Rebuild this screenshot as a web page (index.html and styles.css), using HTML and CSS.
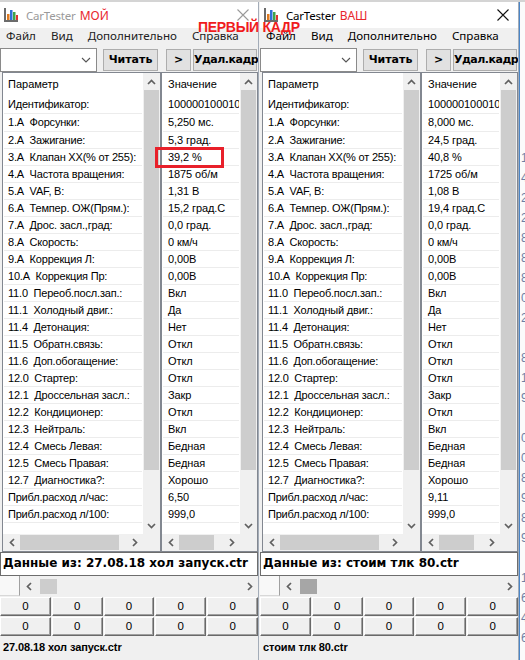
FILE: index.html
```html
<!DOCTYPE html>
<html>
<head>
<meta charset="utf-8">
<link rel="stylesheet" href="styles.css">
</head>
<body>
<div class="desk">
  <div class="win win-left">
    <div class="titlebar">
      <svg class="appicon" width="16" height="16" viewBox="0 0 16 16"><rect x="1" y="1" width="2" height="14" fill="#6b6b6b"/><rect x="1" y="13" width="14" height="2" fill="#6b6b6b"/><rect x="4" y="7" width="2.5" height="6" fill="#e07b20"/><rect x="7" y="3" width="2.5" height="10" fill="#2f6fd6"/><rect x="10" y="5" width="2.5" height="8" fill="#3fa34a"/><rect x="13" y="8" width="2" height="5" fill="#d33"/></svg>
      <span class="ttl">CarTester</span><span class="tag">МОЙ</span>
      <svg class="close" width="12" height="12" viewBox="0 0 12 12"><path d="M0.5 0.5L11.5 11.5M11.5 0.5L0.5 11.5" stroke="currentColor" stroke-width="1.1" fill="none"/></svg>
    </div>
    <div class="menubar"><span>Файл</span><span>Вид</span><span>Дополнительно</span><span>Справка</span></div>
    <div class="toolbar">
      <div class="combo"><svg width="10" height="6" viewBox="0 0 10 6"><path d="M1 1L5 5L9 1" stroke="#555" stroke-width="1.1" fill="none"/></svg></div>
      <div class="btn btn-read">Читать</div>
      <div class="btn btn-next">&gt;</div>
      <div class="btn btn-del">Удал.кадр</div>
    </div>
    <div class="lists">
      <div class="panel panel-param">
        <div class="pbody">
          <div class="rows">
            <div class="hdr">Параметр</div>
            <div class="row tall">Идентификатор:</div>
            <div class="row tall">1.А  Форсунки:</div>
            <div class="row">2.А  Зажигание:</div>
            <div class="row">3.А  Клапан ХХ(% от 255):</div>
            <div class="row">4.А  Частота вращения:</div>
            <div class="row">5.А  VAF, В:</div>
            <div class="row">6.А  Темпер. ОЖ(Прям.):</div>
            <div class="row">7.А  Дрос. засл.,град:</div>
            <div class="row">8.А  Скорость:</div>
            <div class="row">9.А  Коррекция Л:</div>
            <div class="row">10.А  Коррекция Пр:</div>
            <div class="row">11.0  Переоб.посл.зап.:</div>
            <div class="row">11.1  Холодный двиг.:</div>
            <div class="row">11.4  Детонация:</div>
            <div class="row">11.5  Обратн.связь:</div>
            <div class="row">11.6  Доп.обогащение:</div>
            <div class="row">12.0  Стартер:</div>
            <div class="row">12.1  Дроссельная засл.:</div>
            <div class="row">12.2  Кондиционер:</div>
            <div class="row">12.3  Нейтраль:</div>
            <div class="row">12.4  Смесь Левая:</div>
            <div class="row">12.5  Смесь Правая:</div>
            <div class="row">12.7  Диагностика?:</div>
            <div class="row">Прибл.расход л/час:</div>
            <div class="row">Прибл.расход л/100:</div>
          </div>
          <div class="vs">
            <div class="ab"><svg width="9" height="6" viewBox="0 0 9 6"><path d="M1 5L4.5 1.5L8 5" stroke="#606060" stroke-width="1.7" fill="none"/></svg></div>
            <div class="vth"></div>
            <div class="vtr"></div>
            <div class="ab"><svg width="9" height="6" viewBox="0 0 9 6"><path d="M1 1L4.5 4.5L8 1" stroke="#606060" stroke-width="1.7" fill="none"/></svg></div>
          </div>
        </div>
        <div class="hs">
          <div class="hab"><svg width="6" height="9" viewBox="0 0 6 9"><path d="M5 1L1.5 4.5L5 8" stroke="#606060" stroke-width="1.7" fill="none"/></svg></div>
          <div class="htr"><div class="hth th-p"></div></div>
          <div class="hab"><svg width="6" height="9" viewBox="0 0 6 9"><path d="M1 1L4.5 4.5L1 8" stroke="#606060" stroke-width="1.7" fill="none"/></svg></div>
          <div class="corner"></div>
        </div>
      </div>
      <div class="panel panel-val">
        <div class="pbody">
          <div class="rows vals">
            <div class="hdr">Значение</div>
            <div class="row tall">100000100010</div>
            <div class="row tall">5,250 мс.</div>
            <div class="row">5,3 град.</div>
            <div class="row">39,2 %</div>
            <div class="row">1875 об/м</div>
            <div class="row">1,31 В</div>
            <div class="row">15,2 град.С</div>
            <div class="row">0,0 град.</div>
            <div class="row">0 км/ч</div>
            <div class="row">0,00В</div>
            <div class="row">0,00В</div>
            <div class="row">Вкл</div>
            <div class="row">Да</div>
            <div class="row">Нет</div>
            <div class="row">Откл</div>
            <div class="row">Откл</div>
            <div class="row">Откл</div>
            <div class="row">Закр</div>
            <div class="row">Откл</div>
            <div class="row">Вкл</div>
            <div class="row">Бедная</div>
            <div class="row">Бедная</div>
            <div class="row">Хорошо</div>
            <div class="row">6,50</div>
            <div class="row">999,0</div>
          </div>
          <div class="vs">
            <div class="ab"><svg width="9" height="6" viewBox="0 0 9 6"><path d="M1 5L4.5 1.5L8 5" stroke="#606060" stroke-width="1.7" fill="none"/></svg></div>
            <div class="vth"></div>
            <div class="vtr"></div>
            <div class="ab"><svg width="9" height="6" viewBox="0 0 9 6"><path d="M1 1L4.5 4.5L8 1" stroke="#606060" stroke-width="1.7" fill="none"/></svg></div>
          </div>
        </div>
        <div class="hs">
          <div class="hab"><svg width="6" height="9" viewBox="0 0 6 9"><path d="M5 1L1.5 4.5L5 8" stroke="#606060" stroke-width="1.7" fill="none"/></svg></div>
          <div class="htr"><div class="hth th-v"></div></div>
          <div class="hab"><svg width="6" height="9" viewBox="0 0 6 9"><path d="M1 1L4.5 4.5L1 8" stroke="#606060" stroke-width="1.7" fill="none"/></svg></div>
          <div class="corner"></div>
        </div>
      </div>
    </div>
    <div class="datafrom">Данные из: 27.08.18 хол запуск.ctr</div>
    <div class="gscroll">
      <div class="gfix"></div>
      <div class="hs hs-g">
        <div class="hab"><svg width="6" height="9" viewBox="0 0 6 9"><path d="M5 1L1.5 4.5L5 8" stroke="#606060" stroke-width="1.7" fill="none"/></svg></div>
        <div class="htr"><div class="hth th-g"></div></div>
        <div class="hab"><svg width="6" height="9" viewBox="0 0 6 9"><path d="M1 1L4.5 4.5L1 8" stroke="#606060" stroke-width="1.7" fill="none"/></svg></div>
      </div>
    </div>
    <div class="cells">
      <div class="cell">0</div><div class="cell">0</div><div class="cell">0</div><div class="cell">0</div><div class="cell">0</div>
      <div class="cell">0</div><div class="cell">0</div><div class="cell">0</div><div class="cell">0</div><div class="cell">0</div>
    </div>
    <div class="status">27.08.18 хол запуск.ctr</div>
  </div>

  <div class="win win-right">
    <div class="titlebar">
      <svg class="appicon" width="16" height="16" viewBox="0 0 16 16"><rect x="1" y="1" width="2" height="14" fill="#6b6b6b"/><rect x="1" y="13" width="14" height="2" fill="#6b6b6b"/><rect x="4" y="7" width="2.5" height="6" fill="#e07b20"/><rect x="7" y="3" width="2.5" height="10" fill="#2f6fd6"/><rect x="10" y="5" width="2.5" height="8" fill="#3fa34a"/><rect x="13" y="8" width="2" height="5" fill="#d33"/></svg>
      <span class="ttl">CarTester</span><span class="tag">ВАШ</span>
      <svg class="close" width="12" height="12" viewBox="0 0 12 12"><path d="M0.5 0.5L11.5 11.5M11.5 0.5L0.5 11.5" stroke="currentColor" stroke-width="1.1" fill="none"/></svg>
    </div>
    <div class="menubar"><span>Файл</span><span>Вид</span><span>Дополнительно</span><span>Справка</span></div>
    <div class="toolbar">
      <div class="combo"><svg width="10" height="6" viewBox="0 0 10 6"><path d="M1 1L5 5L9 1" stroke="#555" stroke-width="1.1" fill="none"/></svg></div>
      <div class="btn btn-read">Читать</div>
      <div class="btn btn-next">&gt;</div>
      <div class="btn btn-del">Удал.кадр</div>
    </div>
    <div class="lists">
      <div class="panel panel-param">
        <div class="pbody">
          <div class="rows">
            <div class="hdr">Параметр</div>
            <div class="row tall">Идентификатор:</div>
            <div class="row tall">1.А  Форсунки:</div>
            <div class="row">2.А  Зажигание:</div>
            <div class="row">3.А  Клапан ХХ(% от 255):</div>
            <div class="row">4.А  Частота вращения:</div>
            <div class="row">5.А  VAF, В:</div>
            <div class="row">6.А  Темпер. ОЖ(Прям.):</div>
            <div class="row">7.А  Дрос. засл.,град:</div>
            <div class="row">8.А  Скорость:</div>
            <div class="row">9.А  Коррекция Л:</div>
            <div class="row">10.А  Коррекция Пр:</div>
            <div class="row">11.0  Переоб.посл.зап.:</div>
            <div class="row">11.1  Холодный двиг.:</div>
            <div class="row">11.4  Детонация:</div>
            <div class="row">11.5  Обратн.связь:</div>
            <div class="row">11.6  Доп.обогащение:</div>
            <div class="row">12.0  Стартер:</div>
            <div class="row">12.1  Дроссельная засл.:</div>
            <div class="row">12.2  Кондиционер:</div>
            <div class="row">12.3  Нейтраль:</div>
            <div class="row">12.4  Смесь Левая:</div>
            <div class="row">12.5  Смесь Правая:</div>
            <div class="row">12.7  Диагностика?:</div>
            <div class="row">Прибл.расход л/час:</div>
            <div class="row">Прибл.расход л/100:</div>
          </div>
          <div class="vs">
            <div class="ab"><svg width="9" height="6" viewBox="0 0 9 6"><path d="M1 5L4.5 1.5L8 5" stroke="#606060" stroke-width="1.7" fill="none"/></svg></div>
            <div class="vth"></div>
            <div class="vtr"></div>
            <div class="ab"><svg width="9" height="6" viewBox="0 0 9 6"><path d="M1 1L4.5 4.5L8 1" stroke="#606060" stroke-width="1.7" fill="none"/></svg></div>
          </div>
        </div>
        <div class="hs">
          <div class="hab"><svg width="6" height="9" viewBox="0 0 6 9"><path d="M5 1L1.5 4.5L5 8" stroke="#606060" stroke-width="1.7" fill="none"/></svg></div>
          <div class="htr"><div class="hth th-p"></div></div>
          <div class="hab"><svg width="6" height="9" viewBox="0 0 6 9"><path d="M1 1L4.5 4.5L1 8" stroke="#606060" stroke-width="1.7" fill="none"/></svg></div>
          <div class="corner"></div>
        </div>
      </div>
      <div class="panel panel-val">
        <div class="pbody">
          <div class="rows vals">
            <div class="hdr">Значение</div>
            <div class="row tall">100000100010</div>
            <div class="row tall">8,000 мс.</div>
            <div class="row">24,5 град.</div>
            <div class="row">40,8 %</div>
            <div class="row">1725 об/м</div>
            <div class="row">1,08 В</div>
            <div class="row">19,4 град.С</div>
            <div class="row">0,0 град.</div>
            <div class="row">0 км/ч</div>
            <div class="row">0,00В</div>
            <div class="row">0,00В</div>
            <div class="row">Вкл</div>
            <div class="row">Да</div>
            <div class="row">Нет</div>
            <div class="row">Откл</div>
            <div class="row">Откл</div>
            <div class="row">Откл</div>
            <div class="row">Закр</div>
            <div class="row">Откл</div>
            <div class="row">Вкл</div>
            <div class="row">Бедная</div>
            <div class="row">Бедная</div>
            <div class="row">Хорошо</div>
            <div class="row">9,11</div>
            <div class="row">999,0</div>
          </div>
          <div class="vs">
            <div class="ab"><svg width="9" height="6" viewBox="0 0 9 6"><path d="M1 5L4.5 1.5L8 5" stroke="#606060" stroke-width="1.7" fill="none"/></svg></div>
            <div class="vth"></div>
            <div class="vtr"></div>
            <div class="ab"><svg width="9" height="6" viewBox="0 0 9 6"><path d="M1 1L4.5 4.5L8 1" stroke="#606060" stroke-width="1.7" fill="none"/></svg></div>
          </div>
        </div>
        <div class="hs">
          <div class="hab"><svg width="6" height="9" viewBox="0 0 6 9"><path d="M5 1L1.5 4.5L5 8" stroke="#606060" stroke-width="1.7" fill="none"/></svg></div>
          <div class="htr"><div class="hth th-v"></div></div>
          <div class="hab"><svg width="6" height="9" viewBox="0 0 6 9"><path d="M1 1L4.5 4.5L1 8" stroke="#606060" stroke-width="1.7" fill="none"/></svg></div>
          <div class="corner"></div>
        </div>
      </div>
    </div>
    <div class="datafrom">Данные из: стоим тлк 80.ctr</div>
    <div class="gscroll">
      <div class="gfix"></div>
      <div class="hs hs-g">
        <div class="hab"><svg width="6" height="9" viewBox="0 0 6 9"><path d="M5 1L1.5 4.5L5 8" stroke="#606060" stroke-width="1.7" fill="none"/></svg></div>
        <div class="htr"><div class="hth th-g"></div></div>
        <div class="hab"><svg width="6" height="9" viewBox="0 0 6 9"><path d="M1 1L4.5 4.5L1 8" stroke="#606060" stroke-width="1.7" fill="none"/></svg></div>
      </div>
    </div>
    <div class="cells">
      <div class="cell">0</div><div class="cell">0</div><div class="cell">0</div><div class="cell">0</div><div class="cell">0</div>
      <div class="cell">0</div><div class="cell">0</div><div class="cell">0</div><div class="cell">0</div><div class="cell">0</div>
    </div>
    <div class="status">стоим тлк 80.ctr</div>
  </div>

  <div class="strip"><pre class="behind">







1
4
2
2
8
8
8
0
2

8
1.
9

0
0
8
9
8
9

1
6
4
6</pre></div>
</div>

<div class="overlay-title">ПЕРВЫЙ КАДР</div>
<div class="overlay-box"></div>
</body>
</html>
```

FILE: styles.css
```css
* { box-sizing: border-box; margin: 0; padding: 0; }
html, body { width: 525px; height: 660px; overflow: hidden; }
body {
  background: #d4d4d4;
  font-family: "Liberation Sans", Arial, sans-serif;
  font-size: 11px;
  color: #000;
  position: relative;
}
.desk { display: flex; height: 660px; padding-top: 2px; }

.win {
  height: 658px;
  background: #f0f0f0;
  display: flex;
  flex-direction: column;
  overflow: hidden;
  flex: none;
}
.win-left { width: 258px; }
.win-right {
  width: 261px;
  padding-left: 1px;
  border-left: 1px solid #a3acb8;
  border-right: 1px solid #a3acb8;
}
.win > * { flex: none; }

/* title bar */
.titlebar {
  height: 26px;
  background: #fff;
  display: flex;
  align-items: center;
  padding-left: 3px;
  font-family: "Noto Sans", "Open Sans", sans-serif;
}
.appicon { margin-right: 7px; flex: none; }
.ttl { font-size: 11.5px; color: #9a9a9a; letter-spacing: -0.2px; }
.win-right .ttl { color: #000; }
.tag { font-size: 12px; color: #e8262c; margin-left: 4px; }
.close { margin-left: auto; margin-right: 9px; color: #9a9a9a; flex: none; }
.win-right .close { color: #111; }

/* menu */
.menubar {
  height: 18px;
  display: flex;
  gap: 15px;
  padding-left: 6px;
  font-family: "Noto Sans", "Open Sans", sans-serif;
  font-size: 11.6px;
  line-height: 14px;
  padding-top: 1px;
  color: #222;
  background: #f0f0f0;
}
.win-right .menubar { color: #000; }

/* toolbar */
.toolbar { height: 26px; display: flex; align-items: flex-start; }
.combo {
  width: 97px;
  height: 24px;
  margin-top: 2px;
  border: 1px solid #8a8a8a;
  background: #fff;
  display: flex;
  align-items: center;
  justify-content: flex-end;
  padding-right: 5px;
}
.btn {
  height: 22px;
  margin-top: 3px;
  background: #e1e1e1;
  border: 1px solid #adadad;
  font-family: "DejaVu Sans", sans-serif;
  font-weight: bold;
  font-size: 11px;
  line-height: 20px;
  text-align: center;
  white-space: nowrap;
  flex: none;
}
.btn-read { margin-left: 6px; width: 55px; }
.btn-next { margin-left: 8px; width: 25px; }
.btn-del { margin-left: 2px; width: 64px; letter-spacing: -0.5px; }

/* lists */
.lists { height: 480px; display: flex; padding-left: 2px; }
.panel {
  border: 1px solid #828790;
  display: flex;
  flex-direction: column;
  background: #fff;
  flex: none;
}
.panel-param { width: 159px; }
.panel-val { width: 97px; }
.pbody { height: 461px; display: flex; }
.rows { flex: 1; overflow: hidden; background: #fff; }
.hdr {
  height: 23px;
  line-height: 22px;
  padding-left: 5px;
  white-space: pre;
}
.row {
  height: 17px;
  line-height: 16px;
  margin: 0 1px;
  padding-left: 4px;
  border-bottom: 1px solid #ececec;
  white-space: pre;
  overflow: hidden;
  letter-spacing: -0.2px;
}
.row.tall { height: 18px; line-height: 17px; }
.vals .hdr { padding-left: 6px; }
.vals .row { padding-left: 5px; letter-spacing: -0.1px; }

.vs {
  width: 17px;
  flex: none;
  background: #f0f0f0;
  display: flex;
  flex-direction: column;
}
.ab { height: 17px; display: flex; align-items: center; justify-content: center; flex: none; }
.vth { height: 380px; margin: 0 1px; background: #cdcdcd; flex: none; }
.vtr { flex: 1; }

.hs {
  height: 17px;
  display: flex;
  background: #f0f0f0;
}
.hab { width: 17px; flex: none; display: flex; align-items: center; justify-content: center; }
.htr { flex: 1; display: flex; align-items: center; }
.hth { height: 15px; background: #cdcdcd; }
.th-p { width: 99px; }
.th-v { width: 35px; }
.th-g { width: 17px; margin-left: 3px; }
.win-right .th-g { background: #a6a6a6; }
.corner { width: 17px; flex: none; background: #f0f0f0; }

/* data from */
.datafrom {
  height: 24px;
  border: 1px solid #6d6d6d;
  background: #fff;
  font-family: "DejaVu Sans", sans-serif;
  font-weight: bold;
  font-size: 12px;
  line-height: 20px;
  padding-left: 2px;
  white-space: nowrap;
  overflow: hidden;
}

/* grid */
.gscroll { height: 20px; display: flex; align-items: center; }
.gfix {
  width: 20px;
  height: 20px;
  background: #f8f8f8;
  border-right: 1px solid #a0a0a0;
  border-bottom: 1px solid #d8d8d8;
  flex: none;
}
.hs-g { flex: 1; height: 19px; }
.cells {
  display: grid;
  grid-template-columns: repeat(5, 1fr);
  grid-auto-rows: 19px;
  gap: 1px;
  padding-top: 1px;
  height: 41px;
}
.cell {
  background: #f0f0f0;
  border-top: 1px solid #fff;
  border-left: 1px solid #fff;
  border-right: 1px solid #696969;
  border-bottom: 1px solid #696969;
  box-shadow: inset -1px -1px 0 #a0a0a0;
  text-align: center;
  font-size: 11.5px;
  line-height: 17px;
}

/* status */
.status {
  flex: 1;
  font-weight: bold;
  font-size: 11px;
  line-height: 21px;
  padding-left: 3px;
  white-space: nowrap;
  letter-spacing: -0.1px;
}

/* desktop strip behind */
.strip {
  flex: 1;
  background: #fbfbfb;
  border-left: 1px solid #4a86c8;
  overflow: hidden;
}
.behind {
  font-family: "Liberation Sans", Arial, sans-serif;
  font-size: 12px;
  line-height: 20px;
  color: #6d7fa5;
  padding-left: 1px;
  padding-top: 6px;
}

/* overlays drawn over the windows */
.overlay-title {
  position: absolute;
  left: 198px;
  top: 20px;
  font-family: "Liberation Sans", Arial, sans-serif;
  font-weight: bold;
  font-size: 14px;
  line-height: 14px;
  color: #f01c1c;
  letter-spacing: -0.3px;
  white-space: nowrap;
}
.overlay-box {
  position: absolute;
  left: 155px;
  top: 147px;
  width: 69px;
  height: 21px;
  border: 3px solid #e8202a;
}
```
